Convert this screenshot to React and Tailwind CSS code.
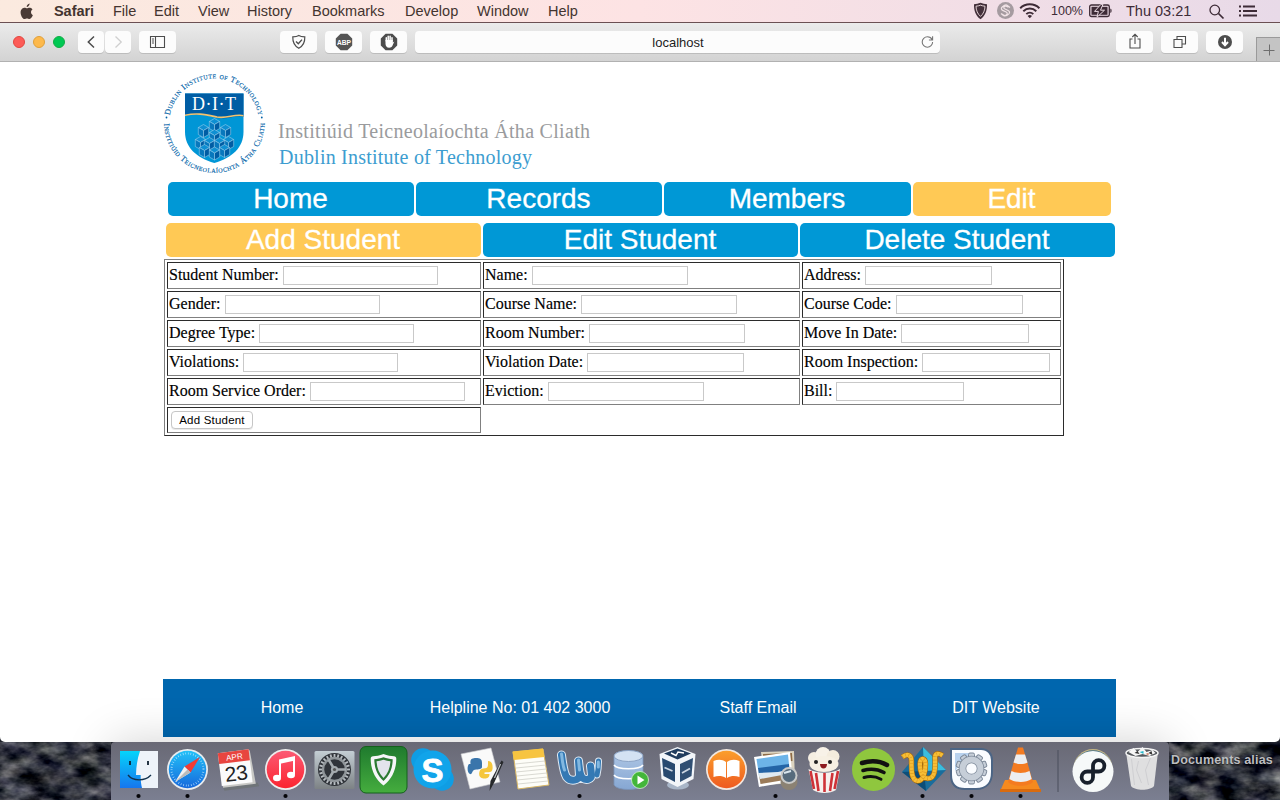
import React from "react";

const sans = "font-['Liberation_Sans',Arial,sans-serif]";
const serif = "font-['Liberation_Serif',serif]";

function Apple() {
  return (
    <svg className="block" width="14" height="17" viewBox="0 0 14 17" fill="#4a3b36">
      <path d="M9.6 0.4C9.7 2 8.3 3.9 6.7 3.9 6.5 2.3 8 .7 9.6.4zM11 9c0-1.6 1.300-2.400 1.500-2.600C11.600 5 10.200 4.700 9.600 4.700c-1.100-.1-2 .6-2.600.6-.6 0-1.400-.6-2.300-.6C3.200 4.700.6 5.900.6 9.400c0 2.900 2 6.600 3.900 6.600.9 0 1.400-.6 2.500-.6 1.100 0 1.500.6 2.500.6 1.500 0 2.900-2.400 3.400-3.900C12 11.700 11 10.700 11 9z" />
    </svg>
  );
}

const menus = [
  ["Safari", "w-[59px] font-bold tracking-[-0.05px]"],
  ["File", "w-[41px]"],
  ["Edit", "w-[44px]"],
  ["View", "w-[49px]"],
  ["History", "w-[65px]"],
  ["Bookmarks", "w-[93px]"],
  ["Develop", "w-[72px]"],
  ["Window", "w-[71px]"],
  ["Help", "w-[40px]"],
];

function StatusIcons() {
  return (
    <svg className="block" width="72" height="22" viewBox="972 0 72 22" fill="none">
      <path d="M980.500 2.800c2 .9 4.200 1.100 6.500 1.400.3 6.300-2 11.800-6.500 15-4.500-3.200-6.800-8.700-6.500-15 2.300-.3 4.500-.5 6.500-1.400z" fill="#43303a" />
      <path d="M980.500 5.200c1.500.6 2.900.8 4.500 1-.1 4-1.600 7.800-4.500 10.200-2.900-2.400-4.400-6.200-4.500-10.200 1.600-.2 3-.4 4.500-1z" stroke="#eedde0" strokeWidth=".9" />
      <circle cx="1005.500" cy="10.500" r="8.500" fill="#a59ba0" />
      <path d="M1010 7.500l-3-2.300c-1.300-.9-3.200.4-4.800 1.800-1.700 1.500-.5 2.800.5 3.400l3.500 1.600c1.600.8 1.200 2.300 0 3.100-1.200.9-2.500.4-4.300-1.100M1001 13.500l2.400 2c2 1.200 3.800 0 5.500-1.700 1.400-1.500.3-2.700-.8-3.300l-3.500-1.700c-1.200-.7-1-1.700.2-2.500 1-.6 2-.2 3.600.9" stroke="#f1e3e6" strokeWidth="1.200" />
      <g stroke="#3d2b36" strokeWidth="2"><path d="M1020.200 8.200c5.300-5.200 13.900-5.200 19.200 0M1023.300 11.200c3.700-3.500 9.300-3.500 13 0M1026.300 14.100c2-1.900 5-1.900 7 0" /></g>
      <path d="M1029.800 18.200l-2.200-2.300c1.200-1.200 3.200-1.200 4.400 0z" fill="#3d2b36" />
    </svg>
  );
}

function Battery() {
  return (
    <svg className="block" width="24" height="14" viewBox="0 0 24 14">
      <rect x=".7" y="1" width="19.600" height="11.500" rx="1.800" fill="none" stroke="#3d2b36" strokeWidth="1.300" />
      <rect x="2.500" y="2.800" width="16" height="8" fill="#3d2b36" />
      <path d="M12 .3L5.500 7.400h3.900L8 13.200l7.500-7h-4l2.500-5.900z" fill="#3d2b36" stroke="#eadbe3" strokeWidth="1" />
      <path d="M21.300 4.800h.7c.8.600.8 3.300 0 3.900h-.7z" fill="#3d2b36" />
    </svg>
  );
}

function MenuBar() {
  return (
    <div className="flex h-[22px] shrink-0 items-center bg-linear-to-r from-[#fbeadf] via-[#fde3e4] to-[#e8dae8] pl-[20px] text-[14.5px] text-[#43342f]">
      <div className="w-[34px]"><Apple /></div>
      {menus.map(([t, c]) => <div key={t} className={`${c} pt-px`}>{t}</div>)}
      <div className="ml-auto flex items-center text-[#3d2b36]">
        <StatusIcons />
        <div className="ml-[7px] w-[38px] whitespace-nowrap text-[12.5px]">100%</div>
        <div className="w-[37px]"><Battery /></div>
        <div className="w-[83px] whitespace-nowrap pt-px">Thu 03:21</div>
        <svg className="block" width="71" height="22" viewBox="1209 0 71 22" fill="none" stroke="#3d2b36">
          <circle cx="1214.800" cy="10" r="4.800" strokeWidth="1.300" /><path d="M1218.500 13.500l5 5" strokeWidth="1.700" />
          <path d="M1243 6.500h12M1243 11h14M1243 15.500h14" strokeWidth="1.800" /><path d="M1239 6.500h2M1239 11h2M1239 15.500h2" strokeWidth="1.800" />
        </svg>
      </div>
    </div>
  );
}

function Btn({ w = "w-[37px]", children }) {
  return (
    <div className={`${w} flex h-[22px] shrink-0 items-center justify-center rounded-[4px] bg-[#fcfcfc] shadow-[0_1px_0_rgba(0,0,0,0.12)]`}>
      <svg className="block" width="22" height="22" viewBox="0 0 22 22" fill="none" stroke="#4d4d4d" strokeWidth="1.100">{children}</svg>
    </div>
  );
}

function Toolbar() {
  return (
    <div className="flex h-[40px] shrink-0 items-center border-t border-b border-t-[#6b5053] border-b-[#b1b1b1] bg-linear-to-b from-[#ebebeb] to-[#d3d3d3] pl-[13px]">
      <div className="flex w-[65px] gap-[8px]">
        <span className="size-[12px] rounded-full border border-[#e2463f] bg-[#fc5b57]" />
        <span className="size-[12px] rounded-full border border-[#e0a03a] bg-[#fdb94c]" />
        <span className="size-[12px] rounded-full border border-[#12ac45] bg-[#00c853]" />
      </div>
      <div className="flex gap-px">
        <Btn w="w-[26px]"><path d="M14 5.500L8.300 11l5.700 5.500" strokeWidth="1.500" /></Btn>
        <Btn w="w-[26px]"><path d="M8.500 5.500l5.700 5.500-5.700 5.500" stroke="#cfcfcf" strokeWidth="1.300" /></Btn>
      </div>
      <div className="ml-[8px]">
        <Btn><path d="M3.500 5.500h14v11h-14zM8.500 5.500v11M5 8h2M5 10h2M5 12h2" /></Btn>
      </div>
      <div className="ml-[104px] flex gap-[8px]">
        <Btn>
          <path d="M10.800 4.500c2 1.200 4 1.300 6 1.400.2 5-1.800 9-6 11.300-4.200-2.300-6.200-6.300-6-11.300 2-.1 4-.2 6-1.400z" strokeWidth="1.200" /><path d="M8 10.500l2.300 2.300 3.700-4.200" strokeWidth="1.400" />
        </Btn>
        <Btn>
          <path d="M7.600 2.800h6.800l4.800 4.800v6.800l-4.800 4.800H7.600l-4.800-4.800V7.600z" fill="#555" stroke="none" />
          <text x="4" y="13.600" textLength="14" lengthAdjust="spacingAndGlyphs" fontSize="7.500" fontWeight="bold" fill="#fff" stroke="none" className={sans}>ABP</text>
        </Btn>
        <Btn>
          <path d="M7.600 2.800h6.800l4.800 4.800v6.800l-4.800 4.800H7.600l-4.800-4.800V7.600z" fill="#4d4d4d" stroke="none" />
          <path d="M8.300 10V6.800M10.200 9V5.300M12.100 9V5.300M14 10V6.800" stroke="#fff" strokeWidth="1.500" strokeLinecap="round" /><path d="M7.500 9h7.300v2.500l1.500-1-2 4.500c-.7 1.200-1.500 1.700-3.100 1.700-2.500 0-3.700-1.700-3.700-4z" fill="#fff" stroke="none" />
        </Btn>
      </div>
      <div className="ml-[8px] flex h-[22px] w-[525px] items-center rounded-[4px] bg-[#fcfcfc] shadow-[0_1px_0_rgba(0,0,0,0.12)]">
        <div className="w-[504px] pl-[22px] pt-px text-center text-[13px] text-[#1c1c1c]">localhost</div>
        <svg className="block" width="16" height="16" viewBox="0 0 16 16" fill="none" stroke="#777" strokeWidth="1.100"><path d="M13.600 8A5.200 5.200 0 1 1 8.400 2.800c2.200 0 4 1.200 4.800 2.900M13.600 2.300v3.700H9.900" /></svg>
      </div>
      <div className="ml-[176px] flex gap-[8px]">
        <Btn><path d="M8.500 8H6v9h10V8h-2.500M11 13V3.500M8.300 6L11 3.300 13.700 6" /></Btn>
        <Btn><path d="M5 8.500h8v8H5zM8 8.500V5.500h8.500V13H13" /></Btn>
        <Btn><circle cx="11" cy="11" r="7" fill="#4d4d4d" stroke="none" /><path d="M11 6.800v6M8 11l3 3.300 3-3.300" stroke="#fff" strokeWidth="2" /></Btn>
      </div>
      <div className="ml-auto flex h-[24px] w-[24px] items-center justify-center self-end border-t border-l border-[#9a9a9a] bg-[#c4c4c4]">
        <svg className="block" width="12" height="12" viewBox="0 0 12 12" stroke="#6e6e6e"><path d="M6.500 .5v11M.5 6.500h11" /></svg>
      </div>
    </div>
  );
}

function Cube({ x, y }) {
  return (
    <g transform={`translate(${x} ${y}) scale(1.300)`} stroke="#a9d8f2" strokeWidth=".4">
      <path d="M0-5l4 2.300L0-.4-4-2.700z" fill="#0e8fd2" />
      <path d="M-4-2.700L0-.4V5l-4-2.300z" fill="#0878bd" />
      <path d="M4-2.700L0-.4V5l4-2.300z" fill="#005da4" />
    </g>
  );
}

function Logo() {
  return (
    <svg className="block" width="440" height="116" viewBox="160 62 440 116">
      <defs>
        <path id="ring-top" d="M169.200 123.500a45 45 0 0 1 90 0" />
        <path id="ring-bottom" d="M164 122.500a50.300 50.300 0 0 0 100.600 0" />
        <clipPath id="shield"><path d="M185 93.500h58.500v38c0 16-11 26-29.200 31.500C196 157.500 185 147.500 185 131.500z" /></clipPath>
      </defs>
      <g fill="#0062a8" className={`${serif} [font-variant:small-caps]`}>
        <text fontSize="8.300" stroke="#0062a8" strokeWidth=".15"><textPath href="#ring-top" startOffset="8" textLength="125">Dublin Institute of Technology</textPath></text>
        <text fontSize="8.300" stroke="#0062a8" strokeWidth=".15"><textPath href="#ring-bottom" startOffset="1" textLength="156">Institiúid Teicneolaíochta Átha Cliath</textPath></text>
        <circle cx="166.500" cy="117.500" r=".9" /><circle cx="261.800" cy="117.500" r=".9" />
      </g>
      <g clipPath="url(#shield)">
        <rect x="184" y="93" width="61" height="72" fill="#0096d6" />
        <path d="M184 93h61v24c-10-3-17 3-28 1-12-3-20-5-33-2z" fill="#005da4" />
        <path d="M184 115.500c13-3 21-1 33 1.500 11 2 18-4 28-1" fill="none" stroke="#f3c36f" strokeWidth="1.600" />
        <Cube x="214.500" y="125" /><Cube x="203.500" y="131" /><Cube x="225.500" y="131" />
        <Cube x="214.500" y="136" /><Cube x="200.500" y="143" /><Cube x="228.500" y="143" />
        <Cube x="209.500" y="144" /><Cube x="219.500" y="144" /><Cube x="204.500" y="151" /><Cube x="224.500" y="151" /><Cube x="214.500" y="153.500" />
      </g>
      <text x="192" y="110" fontSize="18" fill="#fff" textLength="44" className={serif}>D·I·T</text>
      <text x="278" y="137.500" fontSize="20" fill="#9a9b9d" textLength="312" className={serif}>Institiúid Teicneolaíochta Átha Cliath</text>
      <text x="279" y="163.500" fontSize="20" fill="#3c9dd0" textLength="253" className={serif}>Dublin Institute of Technology</text>
    </svg>
  );
}

function Tab({ w, active, children }) {
  return (
    <div className={`${w} ${active ? "bg-[#ffc955]" : "bg-[#0098d6]"} h-[34px] rounded-[5px] pr-px text-center text-[28px] leading-[34px] text-white [-webkit-text-stroke:0.3px_white]`}>{children}</div>
  );
}

const rows = [
  [["Student Number:", "w-[155px]"], ["Name:", "w-[156px]"], ["Address:", "w-[127px]"]],
  [["Gender:", "w-[155px]"], ["Course Name:", "w-[156px]"], ["Course Code:", "w-[127px]"]],
  [["Degree Type:", "w-[155px]"], ["Room Number:", "w-[156px]"], ["Move In Date:", "w-[128px]"]],
  [["Violations:", "w-[155px]"], ["Violation Date:", "w-[157px]"], ["Room Inspection:", "w-[128px]"]],
  [["Room Service Order:", "w-[155px]"], ["Eviction:", "w-[156px]"], ["Bill:", "w-[128px]"]],
];

const cell = "border border-t-[#2b2b2b] border-l-[#2b2b2b] border-r-[#808080] border-b-[#808080]";

function StudentForm() {
  return (
    <div className="ml-[164px] mt-[2px] grid w-[900px] grid-cols-[314px_317px_259px] gap-[2px] border border-t-[#808080] border-l-[#808080] border-r-[#2b2b2b] border-b-[#2b2b2b] p-[2px]">
      {rows.flat().map(([label, w]) => (
        <label key={label} className={`${cell} flex h-[27px] items-start gap-[4px] pl-px`}>
          <span className={`${serif} whitespace-nowrap text-[16px] leading-[24px] text-black [-webkit-text-stroke:0.15px_black]`}>{label}</span>
          <input className={`${w} mt-[3px] h-[19px] border border-[#c9c9c9] bg-white`} />
        </label>
      ))}
      <div className={`${cell} h-[26px] pl-[3px] pt-[3px]`}>
        <button className="block h-[18px] w-[82px] whitespace-nowrap rounded-[4px] border border-[#c6c6c6] bg-white text-[11.500px] leading-[16px] tracking-[0.2px] text-black shadow-[0_1px_0_rgba(0,0,0,0.08)]">Add Student</button>
      </div>
    </div>
  );
}

function BrowserWindow() {
  return (
    <div className="relative flex h-[720px] shrink-0 flex-col overflow-hidden rounded-b-[5px] bg-white">
      <Toolbar />
      <div className="flex flex-1 flex-col">
        <div className="ml-[160px]"><Logo /></div>
        <div className="ml-[168px] mt-[4px] flex">
          <Tab w="w-[246px] mr-[2px]">Home</Tab>
          <Tab w="w-[246px] mr-[2px]">Records</Tab>
          <Tab w="w-[247px] mr-[2px]">Members</Tab>
          <Tab w="w-[198px]" active>Edit</Tab>
        </div>
        <div className="ml-[166px] mt-[7px] flex gap-[2px]">
          <Tab w="w-[315px]" active>Add Student</Tab>
          <Tab w="w-[315px]">Edit Student</Tab>
          <Tab w="w-[315px]">Delete Student</Tab>
        </div>
        <StudentForm />
        <div className="mb-[5px] ml-[163px] mt-auto grid h-[58px] w-[953px] grid-cols-[238px_238px_238px_238px] items-center bg-[#0066ae] text-center text-[16px] text-white">
          <div>Home</div><div>Helpline No: 01 402 3000</div><div>Staff Email</div><div>DIT Website</div>
        </div>
      </div>
      <div className="pointer-events-none absolute left-[111px] top-full h-[58px] w-[1058px] shadow-[0_0_46px_rgba(0,0,0,0.18)]" />
    </div>
  );
}

function Rocks({ seed, w }) {
  const id = "rock" + seed;
  return (
    <svg className="block shrink-0" width={w} height="58" viewBox={`0 0 ${w} 58`}>
      <filter id={id} x="0" y="0" width="100%" height="100%" colorInterpolationFilters="sRGB">
        <feTurbulence type="fractalNoise" baseFrequency="0.04 0.07" numOctaves="4" seed={seed} />
        <feColorMatrix values=".95 0 0 0 -.29  .93 .04 0 0 -.29  .86 0 .1 0 -.25  0 0 0 0 1" />
      </filter>
      <rect width={w} height="58" fill="#2a2c36" /><rect width={w} height="58" filter={`url(#${id})`} />
    </svg>
  );
}

const ropeW = "M4.500 15c5-4 9-2 9 4 0 7-1 19 6 20 6 0 8-9 8-17 0-6-5-7-5.500-1-.5 8 2 15 8 15.500 7 0 7.500-9 7-21 0-4 3-5 7.500-2";
const gearTeeth = Array.from({ length: 24 }, (_, i) => i * 15);
const cogTeeth = Array.from({ length: 10 }, (_, i) => i * 36);
const icons = [
  <g>
    <rect x="6" y="9" width="38" height="37" fill="url(#finder)" /><path d="M26 9h18v37H28c-1-4-1.500-9-1.300-13H22c.2-9 1.500-17 4-24z" fill="#eef3fa" />
    <path d="M16 19v4M34 19v4" stroke="#123" strokeWidth="1.800" /><path d="M14 33c5 6.500 17 6.500 23 0" fill="none" stroke="#10304c" strokeWidth="1.300" />
  </g>,
  <g>
    <circle cx="24.500" cy="27.500" r="20.500" fill="#e9ecef" /><circle cx="24.500" cy="27.500" r="18.700" fill="url(#blue)" />
    <circle cx="24.500" cy="27.500" r="16" fill="none" stroke="#bfe8ff" strokeWidth="2" strokeDasharray=".6 2" />
    <path d="M37 15L21.500 24.500l6 6z" fill="#f23b35" /><path d="M12 40l9.500-15.500 6 6z" fill="#f2f2f2" /><path d="M12 40l12.500-12.500 3 3z" fill="#bbb" />
  </g>,
  <g transform="rotate(-7 24.500 28)">
    <path d="M9 43h35l1 4H10z" fill="#6f7478" /><path d="M9 10h31l2 34H9z" fill="#c8c8c5" /><rect x="8" y="9" width="31" height="33" fill="#fbfbfb" /><rect x="8" y="9" width="31" height="11" fill="#e8453f" />
    <text x="24" y="17.500" fontSize="8" textAnchor="middle" fill="#fff">APR</text><text x="24" y="38.500" fontSize="21" textAnchor="middle" fill="#222" textLength="23">23</text>
  </g>,
  <g>
    <circle cx="24.500" cy="27.500" r="20.500" fill="#eee" /><circle cx="24.500" cy="27.500" r="18.800" fill="url(#music)" />
    <path d="M19 35.500V19l14-3v16.500" fill="none" stroke="#fff" strokeWidth="2" /><path d="M18 17.500l16-3.500v4.500l-16 3.500z" fill="#fff" /><ellipse cx="16" cy="36" rx="4" ry="3.200" fill="#fff" /><ellipse cx="30" cy="33" rx="4" ry="3.200" fill="#fff" />
  </g>,
  <g>
    <rect x="4.500" y="9" width="40" height="38" rx="1.500" fill="url(#metal)" /><circle cx="24.500" cy="27.500" r="16.500" fill="#30343a" />
    {gearTeeth.map((a) => <rect key={a} x="23.600" y="12" width="1.800" height="4" fill="#b9bec2" transform={`rotate(${a} 24.500 27.500)`} />)}
    <circle cx="24.500" cy="27.500" r="11.500" fill="none" stroke="#8f9599" strokeWidth="2.400" />
    <path d="M24.500 27.500H36M24.500 27.500l-6-10M24.500 27.500l-6 10" stroke="#a5abaf" strokeWidth="2.600" /><circle cx="24.500" cy="27.500" r="3.600" fill="#a5abaf" /><circle cx="24.500" cy="27.500" r="1.600" fill="#555" />
  </g>,
  <g>
    <rect x="1" y="4.500" width="47" height="46.500" rx="6" fill="url(#green)" stroke="#14601c" /><path d="M24.500 12c4 1.800 7.500 2 10.500 2.300 1.500.2 2.300 1 2.300 2.500 0 10.500-4.300 20.500-12.800 26.700-8.500-6.200-12.800-16.200-12.800-26.700 0-1.500.8-2.300 2.300-2.500 3-.3 6.500-.5 10.500-2.300z" fill="#f6f6f8" />
    <path d="M24.500 15.300c3.200 1.300 6 1.600 9.200 1.900 0 8.500-3 16.300-9.200 21.700-6.200-5.400-9.200-13.200-9.200-21.700 3.200-.3 6-.6 9.200-1.900z" fill="#2c7a32" /><path d="M24.500 17.800c2.400.9 4.600 1.200 6.900 1.400-.2 6.600-2.400 12.300-6.900 16.800-4.500-4.500-6.700-10.200-6.900-16.800 2.300-.2 4.500-.5 6.900-1.400z" fill="#e3e4ec" />
  </g>,
  <g>
    <circle cx="15" cy="18" r="11.800" fill="#0f9de4" /><circle cx="34" cy="37" r="11.800" fill="#0f9de4" /><circle cx="24.500" cy="27.500" r="19" fill="#11a4ea" />
    <text x="24.500" y="39.500" fontSize="33" fontWeight="bold" textAnchor="middle" fill="#fff" stroke="#fff" strokeWidth=".8">S</text>
  </g>,
  <g>
    <path d="M4 12l30-6 9 34-30 7z" fill="#fafafa" stroke="#c9c9cd" strokeWidth=".6" />
    <path d="M14 24c-2-7 1-8 5-8s6 1 6 5v4c0 3-6 2-8 3s-2 5-4 4c-3-1-3-8-1-10h9" fill="#3a75ab" /><path d="M31 19c4 0 5 4 4.500 8-.5 4-4 3-8 3.500v1.500h5c0 4-3 5-6 4.500-4-.5-5-3-4-7 .5-2.500 3-3 6-3.200 3-.3 2.500-3.800 2.500-7.300z" fill="#f5c63c" />
    <path d="M44.500 18.500l2 1.500-9 20-5 9 1-10z" fill="#26282b" /><path d="M43.500 22l-6 14" stroke="#bfc3c8" strokeWidth="1.200" />
  </g>,
  <g>
    <path d="M7 10l30-3 6 36-31 4z" fill="#fdfdf8" stroke="#d8b765" strokeWidth="1" /><path d="M6.500 9.500L37 6.500l1.300 8.500-30.500 3z" fill="#f7c440" />
    <path d="M9 22l30-3M10 26l30-3M10 30l30.500-3M11 34l30-3M11 38l30.500-3M12 42l30-3" stroke="#cfcfc8" strokeWidth=".8" />
  </g>,
  <g fill="none" strokeLinecap="round">
    <path d="M6.500 13c1 8 2 17 5 22 4 5 13 4 13-2l-1-14c1 8 1 14 4 17 4 3 9 1 9-3l-1-9" stroke="#dfe9f3" strokeWidth="9" strokeLinejoin="round" /><path d="M43.500 19c0 5-.5 10-1.500 14" stroke="#dfe9f3" strokeWidth="7" />
    <path d="M6.500 13c1 8 2 17 5 22 4 5 13 4 13-2l-1-14c1 8 1 14 4 17 4 3 9 1 9-3l-1-9" stroke="#3479b4" strokeWidth="7" strokeLinejoin="round" /><path d="M43.500 19c0 5-.5 10-1.500 14" stroke="#3479b4" strokeWidth="5" /><path d="M6.500 12c1 6 1 11 3 16M23.500 18l1 10M43.300 20v5" stroke="#83b8e0" strokeWidth="3" />
  </g>,
  <g>
    <path d="M10 15v28c3 6 26 6 29 0V15z" fill="url(#db)" stroke="#7892b7" strokeWidth=".8" /><ellipse cx="24.500" cy="14" rx="14.500" ry="5.500" fill="#d4e2f3" stroke="#8ba3c5" />
    <path d="M10 23c3 5 26 5 29 0M10 33c3 5 26 5 29 0" fill="none" stroke="#fff" strokeWidth="1.500" /><circle cx="36" cy="38" r="8.500" fill="#43b63a" stroke="#d6f1d0" strokeWidth=".8" /><path d="M33.500 33.500v9l7-4.500z" fill="#fff" />
  </g>,
  <g>
    <ellipse cx="25" cy="43" rx="11" ry="4.500" fill="#a9b6c8" /><path d="M24.500 5l18 7-2 25-16 8-16-8L6.500 12z" fill="#f2f5f9" /><path d="M24.500 6.500L38 11.500l-13.500 6-13.500-6z" fill="#203c5e" /><path d="M9 16l13 6v18l-11.500-6z" fill="#28496f" /><path d="M40 16l-13 6v18l11.500-6z" fill="#304f73" />
    <path d="M18 11l5 2.500 2-3.500 6 1" stroke="#fff" strokeWidth="1.400" fill="none" /><path d="M11.500 25.500l8 3.500M29 31l8-4.500" stroke="#ccd6e2" strokeWidth="1.800" fill="none" />
  </g>,
  <g>
    <circle cx="24.500" cy="27.500" r="20.500" fill="#f3e8e0" /><circle cx="24.500" cy="27.500" r="18.800" fill="url(#orange)" /><path d="M11.500 19c5-2 9-1.500 12.500 1v16c-4-2.500-8-2.500-12.500-1zM37.500 19c-5-2-9-1.500-12.500 1v16c4-2.500 8-2.500 12.500-1z" fill="#fff" />
  </g>,
  <g>
    <path d="M10 10l33-1 1 32-30 2z" fill="#dcd3bf" /><path d="M12 12l29-1 .5 8-29 1z" fill="#8e6b45" /><path d="M3 15l36-5 3 29-34 6z" fill="#fff" /><path d="M5.500 17L37 12.500l1 10L7 27z" fill="#6db4e8" /><path d="M7 26l31-4 .7 8L8 34z" fill="#2464a6" /><path d="M8 33l30.700-4 .8 8L9.500 42z" fill="#9b7b59" /><path d="M7 31l20-1 9-2-5 5-22 4z" fill="#dfeaf2" />
    <ellipse cx="38" cy="40" rx="8.500" ry="8" fill="#8b8273" /><circle cx="38" cy="33.500" r="8.500" fill="#c9cac9" /><circle cx="38" cy="33.500" r="6.500" fill="#576b7c" /><path d="M33 31l7-2" stroke="#d9e6ee" strokeWidth="2" />
  </g>,
  <g>
    <circle cx="14" cy="16" r="6" fill="#f5eee2" /><circle cx="23" cy="12.500" r="7.500" fill="#f8f2e8" /><circle cx="33" cy="14.500" r="6.500" fill="#f4ecdd" /><ellipse cx="24" cy="22" rx="14.500" ry="8" fill="#f7f0e3" />
    <path d="M8.500 27c9 5 23 5 31.500 0l-4 21c-6 4-17 4-23 0z" fill="#f6f1ee" /><path d="M10.500 29l3.500 18M16 31l2.500 18M24.500 31v19M32.500 31l-2.500 18M38 29l-3.500 18" stroke="#cf3238" strokeWidth="2.600" />
    <circle cx="16" cy="20" r="2" fill="#222" /><circle cx="30" cy="20" r="2" fill="#222" /><path d="M20 22h7c0 6-7 6-7 0z" fill="#8d1a1f" />
  </g>,
  <g>
    <circle cx="24.500" cy="27.500" r="21.500" fill="#8fc73e" /><path d="M13 21c9-2.800 18-2 25 2" stroke="#111" strokeWidth="4.500" fill="none" strokeLinecap="round" /><path d="M14 28.500c7-2 14.500-1.500 21 2" stroke="#111" strokeWidth="3.600" fill="none" strokeLinecap="round" /><path d="M15 35.500c6-1.600 12-1 17 1.700" stroke="#111" strokeWidth="3" fill="none" strokeLinecap="round" />
  </g>,
  <g>
    <path d="M25 5l23 23-20 21L4 30z" fill="#1a6d9c" /><path d="M25 5l23 23-22 1z" fill="#3bbddd" /><path d="M4 30l22-1 2 20z" fill="#0d4d78" />
    <g fill="none"><path d={ropeW} stroke="#a8690a" strokeWidth="5.400" /><path d={ropeW} stroke="#f7bd35" strokeWidth="4.200" /><path d={ropeW} stroke="#dd9a20" strokeWidth="4.200" strokeDasharray=".6 2.600" /></g>
  </g>,
  <g>
    <path d="M4 7h30c7 0 11 5 11 11v12c0 11-6 17-16 17H18C9 47 4 42 4 33z" fill="#fafcff" stroke="#4c6585" strokeWidth="2" /><path d="M8 11h15L8 29z" fill="#b8d2ef" />
    {cogTeeth.map((a) => <rect key={a} x="21.500" y="11" width="6" height="8" rx="1.500" fill="#c6ced8" stroke="#7d8999" transform={`rotate(${a} 24.500 26.500)`} />)}
    <circle cx="24.500" cy="26.500" r="9" fill="none" stroke="#7d8999" strokeWidth="7.500" /><circle cx="24.500" cy="26.500" r="9" fill="none" stroke="#c6ced8" strokeWidth="6" />
  </g>,
  <g>
    <path d="M9 38h31l5 11.500H4z" fill="#f58a1f" /><path d="M4 47h41v3H4z" fill="#d96b0e" /><path d="M22 5.500h5l10 34.500c-5 5-20 5-25 0z" fill="#f47b20" /><path d="M20 12.500h9l2.500 8c-4 2-10 2-14 0zM15.500 29c5 2.500 13 2.500 18 0l2.200 8c-6 4-16 4-22.400 0z" fill="#eceef0" />
  </g>,
];
const running = [0, 1, 3, 9, 13, 16, 17, 18];

function Grad({ id, a, b }) {
  return <linearGradient id={id} x1="0" y1="0" x2="0" y2="1"><stop stopColor={a} /><stop offset="1" stopColor={b} /></linearGradient>;
}

function Dock() {
  return (
    <div className="flex h-[58px] overflow-hidden bg-[#22242d]">
      <Rocks seed={7} w={111} />
      <div className="flex w-[1058px] shrink-0 rounded-t-[4px] bg-linear-to-b from-[#696975] to-[#7b7f91] pl-[2.500px]">
        <svg className="absolute size-0">
          <defs>
            <Grad id="finder" a="#05d4fb" b="#1676ee" /><Grad id="blue" a="#22c1f8" b="#1769dc" /><Grad id="music" a="#fc5a74" b="#fb2430" /><Grad id="metal" a="#c4ced4" b="#7d8285" />
            <Grad id="green" a="#1f7a2e" b="#45ad3e" /><Grad id="db" a="#a9c2e2" b="#86a7d3" /><Grad id="orange" a="#fb9e2c" b="#ee5a20" />
          </defs>
        </svg>
        {icons.map((icon, i) => (
          <svg key={i} className={`${sans} block shrink-0 overflow-visible`} width="49" height="58" viewBox="0 0 49 58">
            {icon}{running.includes(i) && <circle cx="24.500" cy="54" r="2.100" fill="#050509" />}
          </svg>
        ))}
        <svg className="block" width="124" height="58" viewBox="1044.500 0 124 58">
          <path d="M1057.500 8v42" stroke="#4b4e5c" />
          <circle cx="1092.500" cy="26.500" r="19.500" fill="#c5b685" /><circle cx="1092.500" cy="27.800" r="19.500" fill="#426d84" /><circle cx="1092.500" cy="29.500" r="20.500" fill="#f6f9f9" />
          <path d="M1092.500 29.500v-5.700a5.700 5.700 0 1 1 5.700 5.700h-11.400a5.700 5.700 0 1 0 5.700 5.700z" fill="none" stroke="#18202c" strokeWidth="3.800" />
          <path d="M1125.500 10h32l-4 34c-4 5-19 5-23 0z" fill="#dfdfe0" /><ellipse cx="1141.500" cy="11" rx="16" ry="4.500" fill="#55595e" stroke="#f4f4f4" strokeWidth="1.500" />
          <path d="M1128 10l5-4 4 4 5-5 4 5 6-2 3 3-6 3-7-2-7 2z" fill="#f7f7f7" /><path d="M1134 11l3-2 2 3zM1148 11l3-2 1 4z" fill="#333" /><path d="M1139 10l4-1v3z" fill="#26b8cb" /><path d="M1145 12l3-1v2z" fill="#c86442" />
          <path d="M1131 17l3 26M1138 19l-2 9 5 13M1150 16l-5 12 3 15" stroke="#cfcfd2" fill="none" />
        </svg>
      </div>
      <div className="grid">
        <div className="col-start-1 row-start-1"><Rocks seed={12} w={111} /></div>
        <div className="z-10 col-start-1 row-start-1 whitespace-nowrap pl-[2px] pt-[10px] text-[12.500px] font-bold leading-[16px] tracking-[0.17px] text-[#bcbdc0] [text-shadow:0_1px_2px_#000]">Documents alias</div>
      </div>
    </div>
  );
}

export default function App() {
  return (
    <div className={`${sans} flex h-[800px] w-[1280px] flex-col overflow-hidden bg-[#22242d]`}>
      <MenuBar />
      <BrowserWindow />
      <Dock />
    </div>
  );
}
